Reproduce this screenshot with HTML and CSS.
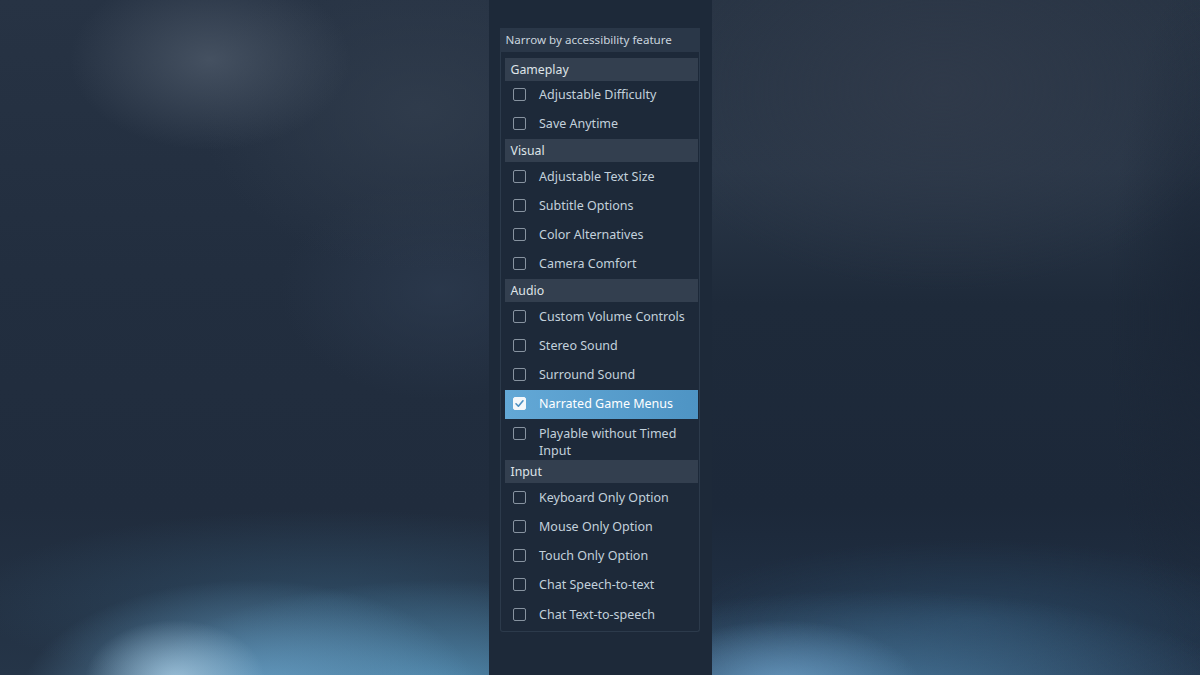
FILE: index.html
```html
<!DOCTYPE html>
<html lang="en">
<head>
<meta charset="utf-8">
<title>Narrow by accessibility feature</title>
<link rel="stylesheet" href="styles.css">
</head>
<body>
<div class="stage">
  <div class="blur blur-left"></div>
  <div class="column">
    <div class="panel">
      <div class="panel-title">Narrow by accessibility feature</div>
      <div class="list">
        <div class="group">Gameplay</div>
        <div class="item"><span class="box"></span><span class="label">Adjustable Difficulty</span></div>
        <div class="item"><span class="box"></span><span class="label">Save Anytime</span></div>
        <div class="group">Visual</div>
        <div class="item"><span class="box"></span><span class="label">Adjustable Text Size</span></div>
        <div class="item"><span class="box"></span><span class="label">Subtitle Options</span></div>
        <div class="item"><span class="box"></span><span class="label">Color Alternatives</span></div>
        <div class="item"><span class="box"></span><span class="label">Camera Comfort</span></div>
        <div class="group">Audio</div>
        <div class="item"><span class="box"></span><span class="label">Custom Volume Controls</span></div>
        <div class="item"><span class="box"></span><span class="label">Stereo Sound</span></div>
        <div class="item"><span class="box"></span><span class="label">Surround Sound</span></div>
        <div class="item checked"><span class="box"><svg viewBox="0 0 13 13" width="13" height="13"><path d="M3 6.8 L5.4 9.2 L10 3.8" fill="none" stroke="#4c8fc0" stroke-width="1.6" stroke-linecap="round" stroke-linejoin="round"/></svg></span><span class="label">Narrated Game Menus</span></div>
        <div class="item"><span class="box"></span><span class="label">Playable without Timed Input</span></div>
        <div class="group">Input</div>
        <div class="item"><span class="box"></span><span class="label">Keyboard Only Option</span></div>
        <div class="item"><span class="box"></span><span class="label">Mouse Only Option</span></div>
        <div class="item"><span class="box"></span><span class="label">Touch Only Option</span></div>
        <div class="item"><span class="box"></span><span class="label">Chat Speech-to-text</span></div>
        <div class="item"><span class="box"></span><span class="label">Chat Text-to-speech</span></div>
      </div>
    </div>
  </div>
  <div class="blur blur-right"></div>
</div>
</body>
</html>
```
FILE: styles.css
```css
* { box-sizing: border-box; }
html, body { margin: 0; padding: 0; }
body {
  width: 1200px;
  height: 675px;
  overflow: hidden;
  background: #1e2a3a;
  font-family: "Noto Sans", "Open Sans", sans-serif;
}
.stage {
  display: flex;
  width: 1200px;
  height: 675px;
}
.blur {
  flex: 1;
  height: 100%;
}
.blur-left {
  background:
    radial-gradient(ellipse 90px 60px at 175px 680px, rgba(170,205,228,0.8), rgba(170,205,228,0) 100%),
    radial-gradient(ellipse 230px 120px at 250px 700px, rgba(110,170,210,0.9), rgba(110,170,210,0) 100%),
    radial-gradient(ellipse 300px 110px at 440px 690px, rgba(90,155,195,0.85), rgba(90,155,195,0) 100%),
    radial-gradient(ellipse 360px 90px at 330px 600px, rgba(55,95,125,0.5), rgba(55,95,125,0) 100%),
    radial-gradient(ellipse 140px 90px at 210px 60px, rgba(72,84,100,0.9), rgba(72,84,100,0) 100%),
    radial-gradient(ellipse 220px 160px at 420px 110px, rgba(50,62,78,0.8), rgba(50,62,78,0) 100%),
    radial-gradient(ellipse 160px 110px at 440px 290px, rgba(44,58,78,0.8), rgba(44,58,78,0) 100%),
    linear-gradient(to bottom, #273344 0%, #222e3f 40%, #202c3d 75%, #253548 100%);
}
.blur-right {
  background:
    radial-gradient(ellipse 140px 70px at 70px 690px, rgba(110,160,200,0.85), rgba(110,160,200,0) 100%),
    radial-gradient(ellipse 380px 110px at 160px 700px, rgba(80,135,175,0.8), rgba(80,135,175,0) 100%),
    radial-gradient(ellipse 300px 80px at 260px 620px, rgba(45,80,110,0.55), rgba(45,80,110,0) 100%),
    radial-gradient(ellipse 300px 200px at 230px 90px, rgba(48,58,74,0.9), rgba(48,58,74,0) 100%),
    radial-gradient(ellipse 90px 340px at 488px 320px, rgba(27,38,54,0.95), rgba(27,38,54,0) 100%),
    linear-gradient(to bottom, #283444 0%, #2a3748 25%, #1e2a3a 45%, #1c2839 75%, #22344a 100%);
}
.column {
  width: 223px;
  height: 100%;
  background: #1d2939;
  padding: 28px 12px 0 11px;
}
.panel {
  width: 200px;
  height: 604px;
  border: 1px solid #2c3a4b;
  border-top: none;
  border-radius: 0 0 3px 3px;
}
.panel-title {
  height: 24px;
  margin: 0 -1px;
  background: #2a3748;
  color: #c9d4de;
  font-size: 11.6px;
  line-height: 24px;
  padding-left: 6px;
  white-space: nowrap;
}
.list {
  padding: 5.5px 1px 4px 4px;
}
.group {
  height: 23px;
  background: #333f4f;
  color: #dfe4e8;
  font-size: 12.3px;
  line-height: 23px;
  padding-left: 6px;
}
.item {
  display: flex;
  align-items: flex-start;
  min-height: 29.25px;
  padding: 5.5px 6px 1.5px 8px;
  color: #c3d1dc;
  font-size: 12.5px;
  line-height: 17px;
}
.item.checked {
  background: linear-gradient(to right, #63a8d6, #4e94c4);
  color: #ffffff;
}
.box {
  flex: none;
  width: 13px;
  height: 13px;
  margin-top: 2px;
  margin-right: 13.5px;
  border: 1px solid #8793a0;
  border-radius: 2px;
  display: flex;
}
.item.checked .box {
  background: #f4f7fa;
  border-color: #f4f7fa;
}
.box svg {
  display: block;
  margin: -1px;
}
.label {
  flex: 1;
}
```
